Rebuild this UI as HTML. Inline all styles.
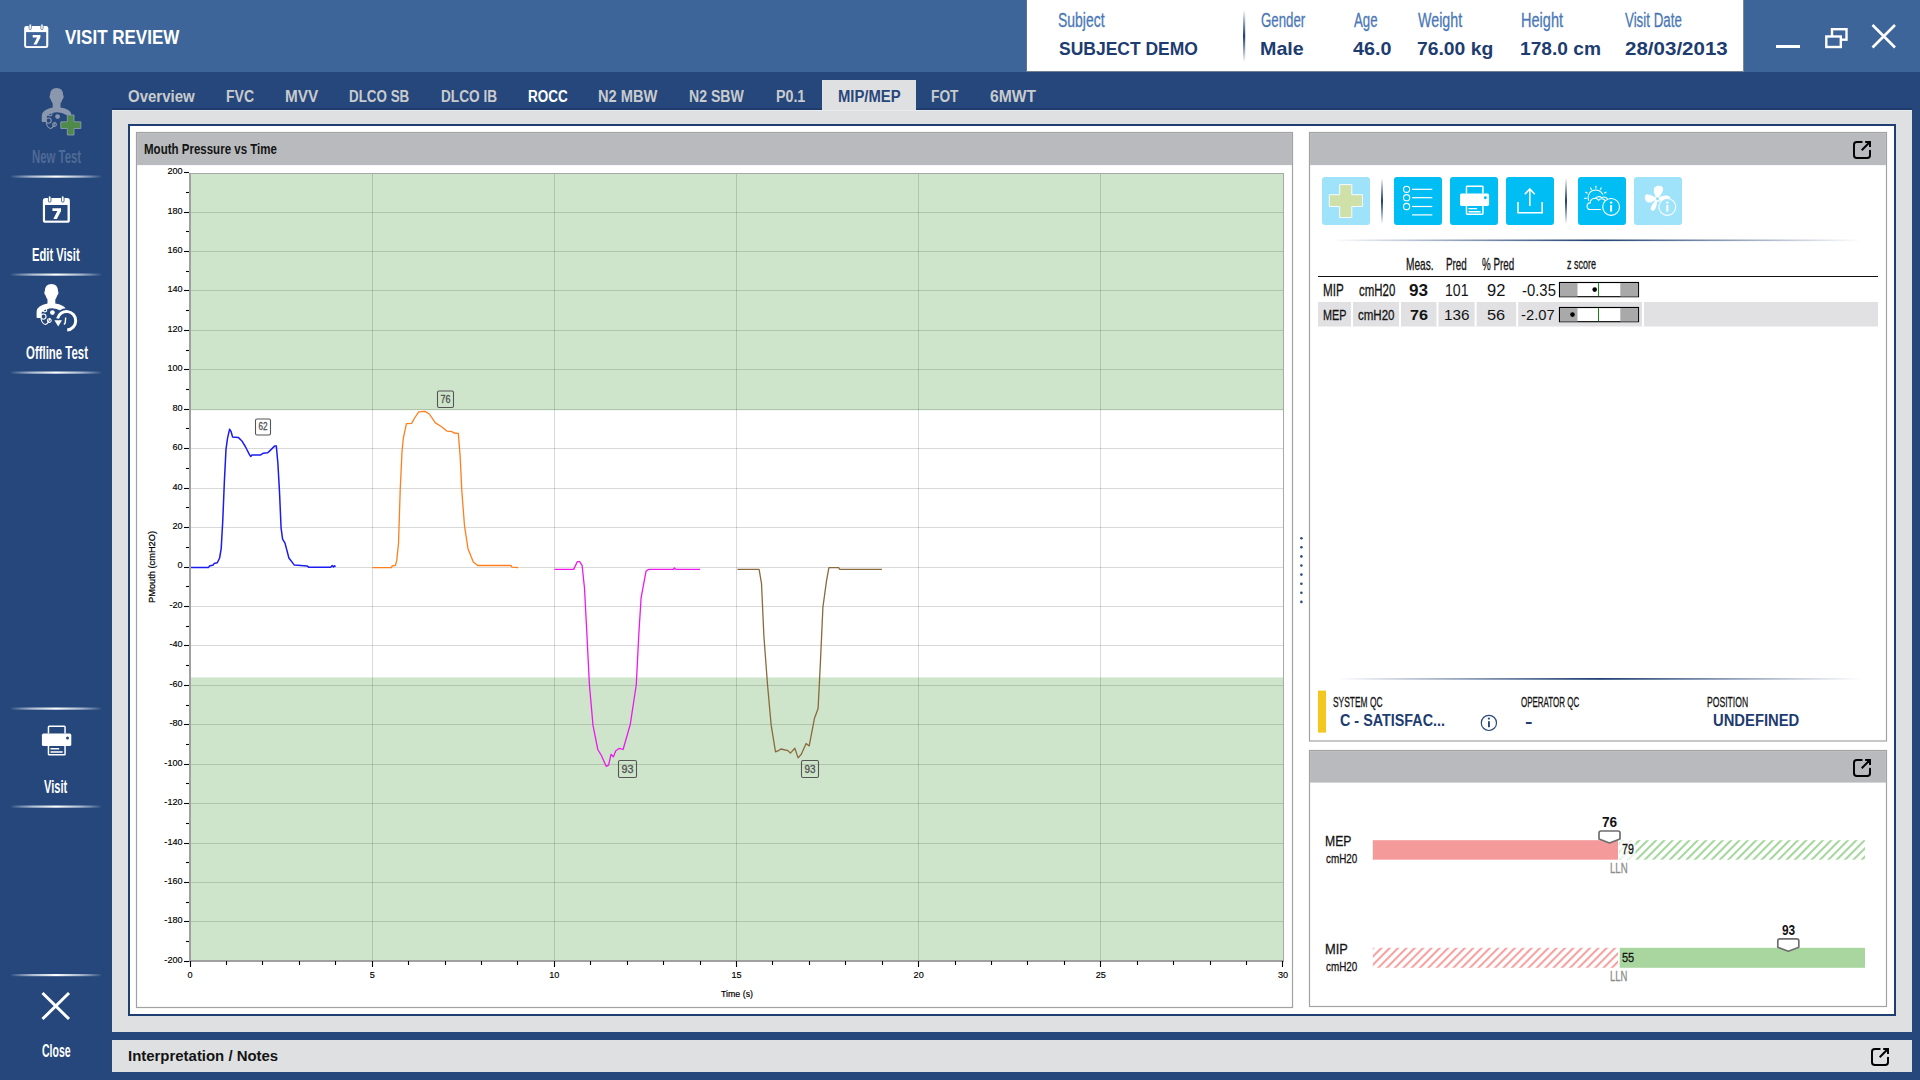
<!DOCTYPE html>
<html><head><meta charset="utf-8"><title>Visit Review</title>
<style>
html,body{margin:0;padding:0}
body{width:1920px;height:1080px;overflow:hidden;background:#25477b;position:relative;font-family:"Liberation Sans",sans-serif}
.a{position:absolute}
.t{position:absolute;white-space:nowrap;transform-origin:0 0}
</style></head><body>
<svg class="a" style="left:0;top:0" width="1920" height="1080" viewBox="0 0 1920 1080"><defs>
<linearGradient id="sepH" x1="0" x2="1" y1="0" y2="0">
 <stop offset="0" stop-color="#ffffff" stop-opacity="0.05"/>
 <stop offset="0.25" stop-color="#dfe6f0" stop-opacity="0.75"/>
 <stop offset="0.5" stop-color="#ffffff" stop-opacity="1"/>
 <stop offset="0.75" stop-color="#dfe6f0" stop-opacity="0.75"/>
 <stop offset="1" stop-color="#ffffff" stop-opacity="0.05"/>
</linearGradient>
<linearGradient id="navyH" x1="0" x2="1" y1="0" y2="0">
 <stop offset="0" stop-color="#1f3f73" stop-opacity="0"/>
 <stop offset="0.5" stop-color="#1f3f73" stop-opacity="1"/>
 <stop offset="1" stop-color="#1f3f73" stop-opacity="0"/>
</linearGradient>
<linearGradient id="navyV" x1="0" x2="0" y1="0" y2="1">
 <stop offset="0" stop-color="#1f3f73" stop-opacity="0"/>
 <stop offset="0.5" stop-color="#1f3f73" stop-opacity="1"/>
 <stop offset="1" stop-color="#1f3f73" stop-opacity="0"/>
</linearGradient>
<pattern id="hatchG" patternUnits="userSpaceOnUse" width="5.9" height="5.9" patternTransform="rotate(45)">
 <rect x="0" y="0" width="2.1" height="5.9" fill="#a6d59e"/>
</pattern>
<pattern id="hatchR" patternUnits="userSpaceOnUse" width="5.9" height="5.9" patternTransform="rotate(45)">
 <rect x="0" y="0" width="2.1" height="5.9" fill="#f4a2a2"/>
</pattern>
</defs><rect x="0" y="0" width="1920" height="72" fill="#3d6599" />
<rect x="1027" y="0" width="716" height="71" fill="#ffffff" />
<line x1="1026.5" y1="0" x2="1026.5" y2="72" stroke="#5f7390" stroke-width="1" />
<line x1="1026" y1="71.5" x2="1743.5" y2="71.5" stroke="#6f7f8f" stroke-width="1" />
<line x1="1743.5" y1="0" x2="1743.5" y2="72" stroke="#7d8a96" stroke-width="1" />
<rect x="1243" y="10" width="2.2" height="52" fill="url(#navyV)" />
<g transform="translate(24,24) scale(1.0)"><rect x="0.15" y="1.9" width="24.15" height="22.2" rx="2.4" fill="#ffffff"/><rect x="2.1" y="8.1" width="20.1" height="14" fill="#3d6599"/><rect x="5.1" y="0" width="2.3" height="5.6" rx="1.1" fill="#ffffff" stroke="#3d6599" stroke-width="0.7"/><rect x="16.8" y="0" width="2.3" height="5.6" rx="1.1" fill="#ffffff" stroke="#3d6599" stroke-width="0.7"/><path d="M8.7 11.1 H16.4 V13.4 L12.7 20.6 H9.5 L13.1 13.6 H8.7 Z" fill="#ffffff"/></g>
<rect x="1776" y="45" width="24" height="3" fill="#ffffff" />
<rect x="1832" y="29.2" width="14.5" height="10.5" fill="none" stroke="#ffffff" stroke-width="2.4"/>
<rect x="1826.3" y="36.5" width="14.5" height="10.5" fill="#3d6599" stroke="#ffffff" stroke-width="2.4"/>
<path d="M1872.5 25 L1895 47.5 M1895 25 L1872.5 47.5" stroke="#ffffff" stroke-width="2.6"/>
<rect x="11" y="175.5" width="90" height="2.2" fill="url(#sepH)" />
<rect x="11" y="273.5" width="90" height="2.2" fill="url(#sepH)" />
<rect x="11" y="371.5" width="90" height="2.2" fill="url(#sepH)" />
<rect x="11" y="707.5" width="90" height="2.2" fill="url(#sepH)" />
<rect x="11" y="805.5" width="90" height="2.2" fill="url(#sepH)" />
<rect x="11" y="974" width="90" height="2.2" fill="url(#sepH)" />
<rect x="822" y="80" width="94" height="31" fill="#dfe0e2" />
<rect x="112" y="110" width="1800" height="922" fill="#dfe0e2" />
<rect x="112" y="108" width="710" height="2" fill="#1f3c6c" />
<rect x="916" y="108" width="996" height="2" fill="#1f3c6c" />
<rect x="112" y="110" width="1800" height="1" fill="#e8ecec" />
<rect x="128" y="124" width="1768" height="892" fill="#1f3f73" />
<rect x="130" y="126" width="1764" height="888" fill="#ffffff" />
<rect x="112" y="1040" width="1800" height="32" fill="#dfe0e2" />
<rect x="136.5" y="132.5" width="1156.0" height="875.0" fill="#ffffff" stroke="#a2a2a2" stroke-width="1.2"/>
<rect x="137.1" y="133.1" width="1154.8" height="32" fill="#b9babe" />
<rect x="1309.5" y="132.5" width="577.0" height="608.5" fill="#ffffff" stroke="#a2a2a2" stroke-width="1.2"/>
<rect x="1310.1" y="133.1" width="575.8" height="32" fill="#b9babe" />
<rect x="1309.5" y="750.5" width="577.0" height="256.0" fill="#ffffff" stroke="#a2a2a2" stroke-width="1.2"/>
<rect x="1310.1" y="751.1" width="575.8" height="31.5" fill="#b9babe" />
<path d="M1861.7 142 H1856.8 Q1854 142 1854 144.8 V155.2 Q1854 158 1856.8 158 H1867.2 Q1870 158 1870 155.2 V150.6" fill="none" stroke="#000" stroke-width="1.95" stroke-linecap="round"/>
<path d="M1861.7 150.2 L1869.6 142.3 M1865.2 142 H1870 V146.9" fill="none" stroke="#000" stroke-width="1.95" stroke-linecap="butt"/>
<path d="M1861.7 760 H1856.8 Q1854 760 1854 762.8 V773.2 Q1854 776 1856.8 776 H1867.2 Q1870 776 1870 773.2 V768.6" fill="none" stroke="#000" stroke-width="1.95" stroke-linecap="round"/>
<path d="M1861.7 768.2 L1869.6 760.3 M1865.2 760 H1870 V764.9" fill="none" stroke="#000" stroke-width="1.95" stroke-linecap="butt"/>
<path d="M1879.7 1049 H1874.8 Q1872 1049 1872 1051.8 V1062.2 Q1872 1065 1874.8 1065 H1885.2 Q1888 1065 1888 1062.2 V1057.6" fill="none" stroke="#000" stroke-width="1.95" stroke-linecap="round"/>
<path d="M1879.7 1057.2 L1887.6 1049.3 M1883.2 1049 H1888 V1053.9" fill="none" stroke="#000" stroke-width="1.95" stroke-linecap="butt"/>
<circle cx="1301.4" cy="538.2" r="1.3" fill="#2b4a7c"/>
<circle cx="1301.4" cy="547.3" r="1.3" fill="#2b4a7c"/>
<circle cx="1301.4" cy="556.4" r="1.3" fill="#2b4a7c"/>
<circle cx="1301.4" cy="565.5" r="1.3" fill="#2b4a7c"/>
<circle cx="1301.4" cy="574.6" r="1.3" fill="#2b4a7c"/>
<circle cx="1301.4" cy="583.7" r="1.3" fill="#2b4a7c"/>
<circle cx="1301.4" cy="592.8" r="1.3" fill="#2b4a7c"/>
<circle cx="1301.4" cy="601.9" r="1.3" fill="#2b4a7c"/>
<rect x="191" y="174" width="1092" height="786" fill="#ffffff" />
<rect x="191" y="174" width="1092" height="236.2419" fill="#cee5cc" />
<rect x="191" y="677.4208" width="1092" height="282.5792" fill="#cee5cc" />
<line x1="191" y1="921.5" x2="1283" y2="921.5" stroke="#000000" stroke-width="1" stroke-opacity="0.15"/>
<line x1="191" y1="882.5" x2="1283" y2="882.5" stroke="#000000" stroke-width="1" stroke-opacity="0.15"/>
<line x1="191" y1="843.5" x2="1283" y2="843.5" stroke="#000000" stroke-width="1" stroke-opacity="0.15"/>
<line x1="191" y1="803.5" x2="1283" y2="803.5" stroke="#000000" stroke-width="1" stroke-opacity="0.15"/>
<line x1="191" y1="764.5" x2="1283" y2="764.5" stroke="#000000" stroke-width="1" stroke-opacity="0.15"/>
<line x1="191" y1="724.5" x2="1283" y2="724.5" stroke="#000000" stroke-width="1" stroke-opacity="0.15"/>
<line x1="191" y1="685.5" x2="1283" y2="685.5" stroke="#000000" stroke-width="1" stroke-opacity="0.15"/>
<line x1="191" y1="645.5" x2="1283" y2="645.5" stroke="#000000" stroke-width="1" stroke-opacity="0.15"/>
<line x1="191" y1="606.5" x2="1283" y2="606.5" stroke="#000000" stroke-width="1" stroke-opacity="0.15"/>
<line x1="191" y1="567.5" x2="1283" y2="567.5" stroke="#000000" stroke-width="1" stroke-opacity="0.15"/>
<line x1="191" y1="527.5" x2="1283" y2="527.5" stroke="#000000" stroke-width="1" stroke-opacity="0.15"/>
<line x1="191" y1="488.5" x2="1283" y2="488.5" stroke="#000000" stroke-width="1" stroke-opacity="0.15"/>
<line x1="191" y1="448.5" x2="1283" y2="448.5" stroke="#000000" stroke-width="1" stroke-opacity="0.15"/>
<line x1="191" y1="409.5" x2="1283" y2="409.5" stroke="#000000" stroke-width="1" stroke-opacity="0.15"/>
<line x1="191" y1="369.5" x2="1283" y2="369.5" stroke="#000000" stroke-width="1" stroke-opacity="0.15"/>
<line x1="191" y1="330.5" x2="1283" y2="330.5" stroke="#000000" stroke-width="1" stroke-opacity="0.15"/>
<line x1="191" y1="290.5" x2="1283" y2="290.5" stroke="#000000" stroke-width="1" stroke-opacity="0.15"/>
<line x1="191" y1="251.5" x2="1283" y2="251.5" stroke="#000000" stroke-width="1" stroke-opacity="0.15"/>
<line x1="191" y1="212.5" x2="1283" y2="212.5" stroke="#000000" stroke-width="1" stroke-opacity="0.15"/>
<line x1="372.5" y1="174" x2="372.5" y2="960" stroke="#000000" stroke-width="1" stroke-opacity="0.15"/>
<line x1="554.5" y1="174" x2="554.5" y2="960" stroke="#000000" stroke-width="1" stroke-opacity="0.15"/>
<line x1="736.5" y1="174" x2="736.5" y2="960" stroke="#000000" stroke-width="1" stroke-opacity="0.15"/>
<line x1="918.5" y1="174" x2="918.5" y2="960" stroke="#000000" stroke-width="1" stroke-opacity="0.15"/>
<line x1="1100.5" y1="174" x2="1100.5" y2="960" stroke="#000000" stroke-width="1" stroke-opacity="0.15"/>
<line x1="191" y1="173.5" x2="1284" y2="173.5" stroke="#a8a8a8" stroke-width="1" />
<line x1="1283.5" y1="173" x2="1283.5" y2="961" stroke="#a8a8a8" stroke-width="1" />
<rect x="189" y="173" width="2" height="789" fill="#a0a0a0" />
<rect x="189" y="960" width="1095" height="2" fill="#a0a0a0" />
<line x1="184" y1="961.5" x2="189" y2="961.5" stroke="#000" stroke-width="1.1" />
<line x1="186" y1="941.5" x2="189" y2="941.5" stroke="#000" stroke-width="1.1" />
<line x1="184" y1="921.5" x2="189" y2="921.5" stroke="#000" stroke-width="1.1" />
<line x1="186" y1="902.5" x2="189" y2="902.5" stroke="#000" stroke-width="1.1" />
<line x1="184" y1="882.5" x2="189" y2="882.5" stroke="#000" stroke-width="1.1" />
<line x1="186" y1="862.5" x2="189" y2="862.5" stroke="#000" stroke-width="1.1" />
<line x1="184" y1="843.5" x2="189" y2="843.5" stroke="#000" stroke-width="1.1" />
<line x1="186" y1="823.5" x2="189" y2="823.5" stroke="#000" stroke-width="1.1" />
<line x1="184" y1="803.5" x2="189" y2="803.5" stroke="#000" stroke-width="1.1" />
<line x1="186" y1="783.5" x2="189" y2="783.5" stroke="#000" stroke-width="1.1" />
<line x1="184" y1="764.5" x2="189" y2="764.5" stroke="#000" stroke-width="1.1" />
<line x1="186" y1="744.5" x2="189" y2="744.5" stroke="#000" stroke-width="1.1" />
<line x1="184" y1="724.5" x2="189" y2="724.5" stroke="#000" stroke-width="1.1" />
<line x1="186" y1="705.5" x2="189" y2="705.5" stroke="#000" stroke-width="1.1" />
<line x1="184" y1="685.5" x2="189" y2="685.5" stroke="#000" stroke-width="1.1" />
<line x1="186" y1="665.5" x2="189" y2="665.5" stroke="#000" stroke-width="1.1" />
<line x1="184" y1="645.5" x2="189" y2="645.5" stroke="#000" stroke-width="1.1" />
<line x1="186" y1="626.5" x2="189" y2="626.5" stroke="#000" stroke-width="1.1" />
<line x1="184" y1="606.5" x2="189" y2="606.5" stroke="#000" stroke-width="1.1" />
<line x1="186" y1="586.5" x2="189" y2="586.5" stroke="#000" stroke-width="1.1" />
<line x1="184" y1="567.5" x2="189" y2="567.5" stroke="#000" stroke-width="1.1" />
<line x1="186" y1="547.5" x2="189" y2="547.5" stroke="#000" stroke-width="1.1" />
<line x1="184" y1="527.5" x2="189" y2="527.5" stroke="#000" stroke-width="1.1" />
<line x1="186" y1="507.5" x2="189" y2="507.5" stroke="#000" stroke-width="1.1" />
<line x1="184" y1="488.5" x2="189" y2="488.5" stroke="#000" stroke-width="1.1" />
<line x1="186" y1="468.5" x2="189" y2="468.5" stroke="#000" stroke-width="1.1" />
<line x1="184" y1="448.5" x2="189" y2="448.5" stroke="#000" stroke-width="1.1" />
<line x1="186" y1="428.5" x2="189" y2="428.5" stroke="#000" stroke-width="1.1" />
<line x1="184" y1="409.5" x2="189" y2="409.5" stroke="#000" stroke-width="1.1" />
<line x1="186" y1="389.5" x2="189" y2="389.5" stroke="#000" stroke-width="1.1" />
<line x1="184" y1="369.5" x2="189" y2="369.5" stroke="#000" stroke-width="1.1" />
<line x1="186" y1="350.5" x2="189" y2="350.5" stroke="#000" stroke-width="1.1" />
<line x1="184" y1="330.5" x2="189" y2="330.5" stroke="#000" stroke-width="1.1" />
<line x1="186" y1="310.5" x2="189" y2="310.5" stroke="#000" stroke-width="1.1" />
<line x1="184" y1="290.5" x2="189" y2="290.5" stroke="#000" stroke-width="1.1" />
<line x1="186" y1="271.5" x2="189" y2="271.5" stroke="#000" stroke-width="1.1" />
<line x1="184" y1="251.5" x2="189" y2="251.5" stroke="#000" stroke-width="1.1" />
<line x1="186" y1="231.5" x2="189" y2="231.5" stroke="#000" stroke-width="1.1" />
<line x1="184" y1="212.5" x2="189" y2="212.5" stroke="#000" stroke-width="1.1" />
<line x1="186" y1="192.5" x2="189" y2="192.5" stroke="#000" stroke-width="1.1" />
<line x1="184" y1="172.5" x2="189" y2="172.5" stroke="#000" stroke-width="1.1" />
<line x1="190.5" y1="961" x2="190.5" y2="967" stroke="#000" stroke-width="1.1" />
<line x1="226.5" y1="961" x2="226.5" y2="965" stroke="#000" stroke-width="1.1" />
<line x1="262.5" y1="961" x2="262.5" y2="965" stroke="#000" stroke-width="1.1" />
<line x1="299.5" y1="961" x2="299.5" y2="965" stroke="#000" stroke-width="1.1" />
<line x1="335.5" y1="961" x2="335.5" y2="965" stroke="#000" stroke-width="1.1" />
<line x1="372.5" y1="961" x2="372.5" y2="967" stroke="#000" stroke-width="1.1" />
<line x1="408.5" y1="961" x2="408.5" y2="965" stroke="#000" stroke-width="1.1" />
<line x1="445.5" y1="961" x2="445.5" y2="965" stroke="#000" stroke-width="1.1" />
<line x1="481.5" y1="961" x2="481.5" y2="965" stroke="#000" stroke-width="1.1" />
<line x1="517.5" y1="961" x2="517.5" y2="965" stroke="#000" stroke-width="1.1" />
<line x1="554.5" y1="961" x2="554.5" y2="967" stroke="#000" stroke-width="1.1" />
<line x1="590.5" y1="961" x2="590.5" y2="965" stroke="#000" stroke-width="1.1" />
<line x1="627.5" y1="961" x2="627.5" y2="965" stroke="#000" stroke-width="1.1" />
<line x1="663.5" y1="961" x2="663.5" y2="965" stroke="#000" stroke-width="1.1" />
<line x1="700.5" y1="961" x2="700.5" y2="965" stroke="#000" stroke-width="1.1" />
<line x1="736.5" y1="961" x2="736.5" y2="967" stroke="#000" stroke-width="1.1" />
<line x1="772.5" y1="961" x2="772.5" y2="965" stroke="#000" stroke-width="1.1" />
<line x1="809.5" y1="961" x2="809.5" y2="965" stroke="#000" stroke-width="1.1" />
<line x1="845.5" y1="961" x2="845.5" y2="965" stroke="#000" stroke-width="1.1" />
<line x1="882.5" y1="961" x2="882.5" y2="965" stroke="#000" stroke-width="1.1" />
<line x1="918.5" y1="961" x2="918.5" y2="967" stroke="#000" stroke-width="1.1" />
<line x1="955.5" y1="961" x2="955.5" y2="965" stroke="#000" stroke-width="1.1" />
<line x1="991.5" y1="961" x2="991.5" y2="965" stroke="#000" stroke-width="1.1" />
<line x1="1027.5" y1="961" x2="1027.5" y2="965" stroke="#000" stroke-width="1.1" />
<line x1="1064.5" y1="961" x2="1064.5" y2="965" stroke="#000" stroke-width="1.1" />
<line x1="1100.5" y1="961" x2="1100.5" y2="967" stroke="#000" stroke-width="1.1" />
<line x1="1137.5" y1="961" x2="1137.5" y2="965" stroke="#000" stroke-width="1.1" />
<line x1="1173.5" y1="961" x2="1173.5" y2="965" stroke="#000" stroke-width="1.1" />
<line x1="1210.5" y1="961" x2="1210.5" y2="965" stroke="#000" stroke-width="1.1" />
<line x1="1246.5" y1="961" x2="1246.5" y2="965" stroke="#000" stroke-width="1.1" />
<line x1="1282.5" y1="961" x2="1282.5" y2="967" stroke="#000" stroke-width="1.1" />
<text x="182.6" y="962.9" text-anchor="end" font-family="Liberation Sans" font-size="9.5" fill="#000" stroke="#000" stroke-width="0.15" transform="translate(182.6 0) scale(0.96 1) translate(-182.6 0)">-200</text>
<text x="182.6" y="923.4" text-anchor="end" font-family="Liberation Sans" font-size="9.5" fill="#000" stroke="#000" stroke-width="0.15" transform="translate(182.6 0) scale(0.96 1) translate(-182.6 0)">-180</text>
<text x="182.6" y="884.0" text-anchor="end" font-family="Liberation Sans" font-size="9.5" fill="#000" stroke="#000" stroke-width="0.15" transform="translate(182.6 0) scale(0.96 1) translate(-182.6 0)">-160</text>
<text x="182.6" y="844.6" text-anchor="end" font-family="Liberation Sans" font-size="9.5" fill="#000" stroke="#000" stroke-width="0.15" transform="translate(182.6 0) scale(0.96 1) translate(-182.6 0)">-140</text>
<text x="182.6" y="805.1" text-anchor="end" font-family="Liberation Sans" font-size="9.5" fill="#000" stroke="#000" stroke-width="0.15" transform="translate(182.6 0) scale(0.96 1) translate(-182.6 0)">-120</text>
<text x="182.6" y="765.7" text-anchor="end" font-family="Liberation Sans" font-size="9.5" fill="#000" stroke="#000" stroke-width="0.15" transform="translate(182.6 0) scale(0.96 1) translate(-182.6 0)">-100</text>
<text x="182.6" y="726.2" text-anchor="end" font-family="Liberation Sans" font-size="9.5" fill="#000" stroke="#000" stroke-width="0.15" transform="translate(182.6 0) scale(0.96 1) translate(-182.6 0)">-80</text>
<text x="182.6" y="686.8" text-anchor="end" font-family="Liberation Sans" font-size="9.5" fill="#000" stroke="#000" stroke-width="0.15" transform="translate(182.6 0) scale(0.96 1) translate(-182.6 0)">-60</text>
<text x="182.6" y="647.4" text-anchor="end" font-family="Liberation Sans" font-size="9.5" fill="#000" stroke="#000" stroke-width="0.15" transform="translate(182.6 0) scale(0.96 1) translate(-182.6 0)">-40</text>
<text x="182.6" y="607.9" text-anchor="end" font-family="Liberation Sans" font-size="9.5" fill="#000" stroke="#000" stroke-width="0.15" transform="translate(182.6 0) scale(0.96 1) translate(-182.6 0)">-20</text>
<text x="182.6" y="568.5" text-anchor="end" font-family="Liberation Sans" font-size="9.5" fill="#000" stroke="#000" stroke-width="0.15" transform="translate(182.6 0) scale(0.96 1) translate(-182.6 0)">0</text>
<text x="182.6" y="529.1" text-anchor="end" font-family="Liberation Sans" font-size="9.5" fill="#000" stroke="#000" stroke-width="0.15" transform="translate(182.6 0) scale(0.96 1) translate(-182.6 0)">20</text>
<text x="182.6" y="489.6" text-anchor="end" font-family="Liberation Sans" font-size="9.5" fill="#000" stroke="#000" stroke-width="0.15" transform="translate(182.6 0) scale(0.96 1) translate(-182.6 0)">40</text>
<text x="182.6" y="450.2" text-anchor="end" font-family="Liberation Sans" font-size="9.5" fill="#000" stroke="#000" stroke-width="0.15" transform="translate(182.6 0) scale(0.96 1) translate(-182.6 0)">60</text>
<text x="182.6" y="410.8" text-anchor="end" font-family="Liberation Sans" font-size="9.5" fill="#000" stroke="#000" stroke-width="0.15" transform="translate(182.6 0) scale(0.96 1) translate(-182.6 0)">80</text>
<text x="182.6" y="371.3" text-anchor="end" font-family="Liberation Sans" font-size="9.5" fill="#000" stroke="#000" stroke-width="0.15" transform="translate(182.6 0) scale(0.96 1) translate(-182.6 0)">100</text>
<text x="182.6" y="331.9" text-anchor="end" font-family="Liberation Sans" font-size="9.5" fill="#000" stroke="#000" stroke-width="0.15" transform="translate(182.6 0) scale(0.96 1) translate(-182.6 0)">120</text>
<text x="182.6" y="292.4" text-anchor="end" font-family="Liberation Sans" font-size="9.5" fill="#000" stroke="#000" stroke-width="0.15" transform="translate(182.6 0) scale(0.96 1) translate(-182.6 0)">140</text>
<text x="182.6" y="253.0" text-anchor="end" font-family="Liberation Sans" font-size="9.5" fill="#000" stroke="#000" stroke-width="0.15" transform="translate(182.6 0) scale(0.96 1) translate(-182.6 0)">160</text>
<text x="182.6" y="213.6" text-anchor="end" font-family="Liberation Sans" font-size="9.5" fill="#000" stroke="#000" stroke-width="0.15" transform="translate(182.6 0) scale(0.96 1) translate(-182.6 0)">180</text>
<text x="182.6" y="174.1" text-anchor="end" font-family="Liberation Sans" font-size="9.5" fill="#000" stroke="#000" stroke-width="0.15" transform="translate(182.6 0) scale(0.96 1) translate(-182.6 0)">200</text>
<text x="190.0" y="978.4" text-anchor="middle" font-family="Liberation Sans" font-size="9.5" fill="#000" stroke="#000" stroke-width="0.15" transform="translate(190.0 0) scale(0.96 1) translate(-190.0 0)">0</text>
<text x="372.2" y="978.4" text-anchor="middle" font-family="Liberation Sans" font-size="9.5" fill="#000" stroke="#000" stroke-width="0.15" transform="translate(372.2 0) scale(0.96 1) translate(-372.2 0)">5</text>
<text x="554.3" y="978.4" text-anchor="middle" font-family="Liberation Sans" font-size="9.5" fill="#000" stroke="#000" stroke-width="0.15" transform="translate(554.3 0) scale(0.96 1) translate(-554.3 0)">10</text>
<text x="736.5" y="978.4" text-anchor="middle" font-family="Liberation Sans" font-size="9.5" fill="#000" stroke="#000" stroke-width="0.15" transform="translate(736.5 0) scale(0.96 1) translate(-736.5 0)">15</text>
<text x="918.7" y="978.4" text-anchor="middle" font-family="Liberation Sans" font-size="9.5" fill="#000" stroke="#000" stroke-width="0.15" transform="translate(918.7 0) scale(0.96 1) translate(-918.7 0)">20</text>
<text x="1100.8" y="978.4" text-anchor="middle" font-family="Liberation Sans" font-size="9.5" fill="#000" stroke="#000" stroke-width="0.15" transform="translate(1100.8 0) scale(0.96 1) translate(-1100.8 0)">25</text>
<text x="1283.0" y="978.4" text-anchor="middle" font-family="Liberation Sans" font-size="9.5" fill="#000" stroke="#000" stroke-width="0.15" transform="translate(1283.0 0) scale(0.96 1) translate(-1283.0 0)">30</text>
<text x="737" y="997.2" text-anchor="middle" font-family="Liberation Sans" font-size="9.8" fill="#000" stroke="#000" stroke-width="0.2" textLength="32" lengthAdjust="spacingAndGlyphs">Time (s)</text>
<text x="0" y="0" text-anchor="middle" font-family="Liberation Sans" font-size="9.8" fill="#000" stroke="#000" stroke-width="0.25" textLength="72" lengthAdjust="spacingAndGlyphs" transform="translate(155.4 567) rotate(-90)">PMouth (cmH2O)</text>
<polyline points="191.0,567.5 208.6,567.5 209.4,566.0 213.3,565.0 214.1,563.5 217.3,562.8 219.6,558.0 221.2,548.6 222.8,520.0 224.4,480.9 226.0,449.4 227.5,438.3 229.6,429.2 231.0,431.3 232.6,437.1 238.5,437.6 241.7,440.7 245.6,447.0 249.6,454.9 250.8,456.5 251.9,454.9 260.6,454.9 263.0,453.3 267.7,452.8 270.0,450.6 274.8,445.9 276.3,445.9 277.9,463.5 279.5,491.9 281.1,528.1 282.6,539.1 285.0,543.1 288.9,558.0 294.4,565.1 307.0,565.9 308.6,567.2 330.7,567.2 332.2,565.6 333.5,567.0 334.5,565.8 335.6,566.7" fill="none" stroke="#1c1cf0" stroke-width="1.5" stroke-linejoin="round"/>
<polyline points="372.4,567.6 391.4,567.6 392.3,565.8 395.3,565.5 396.7,561.0 398.5,543.5 400.2,490.6 402.0,451.9 403.4,437.8 406.4,423.7 411.7,423.4 414.3,418.5 418.7,411.8 424.9,411.4 429.3,414.0 435.4,422.9 441.6,426.7 446.9,431.1 452.1,431.7 453.9,433.0 458.3,433.4 460.1,455.4 461.8,490.6 464.5,525.8 468.0,548.7 473.3,561.9 477.7,565.5 511.1,565.5 512.0,567.2 518.2,567.6" fill="none" stroke="#ff7f1e" stroke-width="1.3" stroke-linejoin="round"/>
<polyline points="554.4,569.4 573.7,569.4 577.3,561.7 579.7,561.7 582.1,565.3 584.5,588.2 587.0,636.3 589.4,684.5 593.0,725.4 597.8,749.5 601.4,755.5 606.2,766.3 608.6,765.1 611.0,754.3 613.4,756.7 615.8,750.7 619.5,748.3 623.1,749.5 630.3,724.2 636.3,684.5 638.7,636.3 641.1,597.8 646.0,571.3 648.4,569.4 673.6,569.4 674.4,567.9 676.0,569.4 700.1,569.4" fill="none" stroke="#ee18ee" stroke-width="1.3" stroke-linejoin="round"/>
<polyline points="737.4,569.4 759.1,569.4 761.5,583.3 763.9,636.3 767.5,684.5 771.2,725.4 775.5,751.9 778.4,750.7 780.8,749.0 788.0,750.7 790.4,753.1 794.8,748.3 798.1,757.9 801.3,754.3 806.1,743.5 809.2,745.9 814.5,718.2 818.1,708.6 820.5,660.4 822.9,607.4 826.5,580.9 828.9,567.7 838.6,567.7 839.8,569.4 881.9,569.4" fill="none" stroke="#8a6a3c" stroke-width="1.3" stroke-linejoin="round"/>
<rect x="255.5" y="419" width="15.0" height="16.0" rx="1.5" fill="none" stroke="#555" stroke-width="1.1"/>
<text x="263.0" y="430.4" text-anchor="middle" font-family="Liberation Sans" font-size="10.4" font-weight="400" fill="#505050" stroke="#505050" stroke-width="0.3" textLength="9.0" lengthAdjust="spacingAndGlyphs">62</text>
<rect x="437.5" y="391" width="16.0" height="16.5" rx="1.5" fill="none" stroke="#555" stroke-width="1.1"/>
<text x="445.5" y="402.9" text-anchor="middle" font-family="Liberation Sans" font-size="10.4" font-weight="400" fill="#505050" stroke="#505050" stroke-width="0.3" textLength="10.0" lengthAdjust="spacingAndGlyphs">76</text>
<rect x="618.5" y="760.5" width="18.0" height="17.0" rx="1.5" fill="none" stroke="#555" stroke-width="1.1"/>
<text x="627.5" y="772.9" text-anchor="middle" font-family="Liberation Sans" font-size="10.4" font-weight="400" fill="#505050" stroke="#505050" stroke-width="0.3" textLength="12.0" lengthAdjust="spacingAndGlyphs">93</text>
<rect x="801.5" y="760.5" width="17.0" height="17.0" rx="1.5" fill="none" stroke="#555" stroke-width="1.1"/>
<text x="810.0" y="772.9" text-anchor="middle" font-family="Liberation Sans" font-size="10.4" font-weight="400" fill="#505050" stroke="#505050" stroke-width="0.3" textLength="11.0" lengthAdjust="spacingAndGlyphs">93</text>
<g transform="translate(42.7,195.9) scale(1.118)"><rect x="0.15" y="1.9" width="24.15" height="22.2" rx="2.4" fill="#ffffff"/><rect x="2.1" y="8.1" width="20.1" height="14" fill="#25477b"/><rect x="5.1" y="0" width="2.3" height="5.6" rx="1.1" fill="#ffffff" stroke="#25477b" stroke-width="0.7"/><rect x="16.8" y="0" width="2.3" height="5.6" rx="1.1" fill="#ffffff" stroke="#25477b" stroke-width="0.7"/><path d="M8.7 11.1 H16.4 V13.4 L12.7 20.6 H9.5 L13.1 13.6 H8.7 Z" fill="#ffffff"/></g>
<g><path d="M51.4 284 Q57.8 284 58 291 Q58.6 291.5 58.4 293.6 Q57.8 295 57.2 295.4 Q56.2 298.5 55.3 299.5 V303.6 Q63.5 305 65.6 308.5 L66.2 311 H61 Q57 308.2 52 308.2 Q45 308.4 41.6 312.6 V317.8 Q38.6 318.4 36.6 317.7 V311.5 Q37.2 305.5 47.5 303.6 V299.5 Q46.6 298.5 45.6 295.4 Q45 295 44.4 293.6 Q44.2 291.5 44.8 291 Q45 284 51.4 284 Z" fill="#ffffff"/><g fill="none" stroke="#ffffff" stroke-width="1.1"><circle cx="43.4" cy="316.6" r="2.6"/><circle cx="44.9" cy="310" r="1.9"/><circle cx="49.3" cy="320.6" r="1.9"/><path d="M41 318.5 Q42 324 45.5 324.5 Q48.5 323.5 50 318 M47.4 308.5 Q50.5 306 54 307 M55 306.8 Q61 306.6 63 310.5"/></g><circle cx="52.4" cy="312.6" r="2.4" fill="#ffffff"/></g>
<path d="M57.6 318.5 A9.2 9.2 0 1 1 67.2 329.9" fill="none" stroke="#25477b" stroke-width="6.5"/>
<path d="M57.6 318.5 A9.2 9.2 0 1 1 67.2 329.9" fill="none" stroke="#ffffff" stroke-width="3"/>
<path d="M54.4 320.2 H62 L58.2 326.4 Z" fill="#ffffff"/>
<path d="M65.7 317.5 L65.2 323 L64 324.5" fill="none" stroke="#ffffff" stroke-width="1.4"/>
<g transform="translate(5.2,-196)"><g><path d="M51.4 284 Q57.8 284 58 291 Q58.6 291.5 58.4 293.6 Q57.8 295 57.2 295.4 Q56.2 298.5 55.3 299.5 V303.6 Q63.5 305 65.6 308.5 L66.2 311 H61 Q57 308.2 52 308.2 Q45 308.4 41.6 312.6 V317.8 Q38.6 318.4 36.6 317.7 V311.5 Q37.2 305.5 47.5 303.6 V299.5 Q46.6 298.5 45.6 295.4 Q45 295 44.4 293.6 Q44.2 291.5 44.8 291 Q45 284 51.4 284 Z" fill="#8a97ad"/><g fill="none" stroke="#8a97ad" stroke-width="1.1"><circle cx="43.4" cy="316.6" r="2.6"/><circle cx="44.9" cy="310" r="1.9"/><circle cx="49.3" cy="320.6" r="1.9"/><path d="M41 318.5 Q42 324 45.5 324.5 Q48.5 323.5 50 318 M47.4 308.5 Q50.5 306 54 307 M55 306.8 Q61 306.6 63 310.5"/></g><circle cx="52.4" cy="312.6" r="2.4" fill="#8a97ad"/></g></g>
<path d="M67.3 115 H74 V121.8 H80.8 V128.5 H74 V135 H67.3 V128.5 H60.8 V121.8 H67.3 Z" fill="#4f8a4a" stroke="#8a9aae" stroke-width="0.9"/>
<g transform="translate(41.9,725.6) scale(1.0)"><path d="M6.55 8 V1.5 Q6.55 0.75 7.3 0.75 H22.4 Q23.15 0.75 23.15 1.5 V8" fill="none" stroke="#ffffff" stroke-width="1.5"/><rect x="0" y="8" width="29.4" height="12.5" rx="1.6" fill="#ffffff"/><circle cx="25.6" cy="12.3" r="1.5" fill="#25477b"/><path d="M6.55 20.5 V28.3 Q6.55 29.05 7.3 29.05 H22.4 Q23.15 29.05 23.15 28.3 V20.5" fill="none" stroke="#ffffff" stroke-width="1.5"/><path d="M8.6 23.2 H17.3 M8.6 26.4 H20.8" stroke="#ffffff" stroke-width="1.4"/></g>
<path d="M42.5 993 L69 1019 M69 993 L42.5 1019" stroke="#ffffff" stroke-width="3"/>
<rect x="1322" y="177" width="48" height="48" fill="#9ee3fa" rx="3"/>
<path d="M1339.7 184.6 H1351.8 V194.7 H1362.5 V206.5 H1351.8 V217.5 H1339.7 V206.5 H1329.3 V194.7 H1339.7 Z" fill="#cfe0a9" stroke="#f4fbff" stroke-width="1"/>
<rect x="1381" y="178" width="2" height="46" fill="url(#navyV)" />
<rect x="1394" y="177" width="48" height="48" fill="#00bef4" rx="3"/>
<circle cx="1406.6" cy="189.3" r="3.1" fill="none" stroke="#fff" stroke-width="1.1"/>
<circle cx="1406.6" cy="197.7" r="3.1" fill="none" stroke="#fff" stroke-width="1.1"/>
<circle cx="1406.6" cy="206.5" r="3.1" fill="none" stroke="#fff" stroke-width="1.1"/>
<line x1="1412" y1="189.3" x2="1432.3" y2="189.3" stroke="#fff" stroke-width="1.2" />
<line x1="1412" y1="197.7" x2="1432.3" y2="197.7" stroke="#fff" stroke-width="1.2" />
<line x1="1412" y1="206.5" x2="1432.3" y2="206.5" stroke="#fff" stroke-width="1.2" />
<line x1="1412" y1="214.9" x2="1432.3" y2="214.9" stroke="#fff" stroke-width="1.2" />
<rect x="1450" y="177" width="48" height="48" fill="#00bef4" rx="3"/>
<g transform="translate(1460,185.6) scale(0.99)"><path d="M6.55 8 V1.5 Q6.55 0.75 7.3 0.75 H22.4 Q23.15 0.75 23.15 1.5 V8" fill="none" stroke="#ffffff" stroke-width="1.5"/><rect x="0" y="8" width="29.4" height="12.5" rx="1.6" fill="#ffffff"/><circle cx="25.6" cy="12.3" r="1.5" fill="#00bef4"/><path d="M6.55 20.5 V28.3 Q6.55 29.05 7.3 29.05 H22.4 Q23.15 29.05 23.15 28.3 V20.5" fill="none" stroke="#ffffff" stroke-width="1.5"/><path d="M8.6 23.2 H17.3 M8.6 26.4 H20.8" stroke="#ffffff" stroke-width="1.4"/></g>
<rect x="1506" y="177" width="48" height="48" fill="#00bef4" rx="3"/>
<path d="M1518 202 V212.8 H1542.2 V202" fill="none" stroke="#fff" stroke-width="1.6"/>
<path d="M1529.8 206 V189.5 M1524.8 194.2 L1529.8 189 L1534.8 194.2" fill="none" stroke="#fff" stroke-width="1.6"/>
<rect x="1565" y="178" width="2" height="46" fill="url(#navyV)" />
<rect x="1578" y="177" width="48" height="48" fill="#00bef4" rx="3"/>
<g fill="none" stroke="#fff" stroke-width="1.1"><path d="M1588.7 200.8 A7.4 7.4 0 0 1 1602.9 194.6"/><path d="M1595.9 185.8 V188.6 M1590.4 187.6 L1591.6 189.9 M1601.4 187.6 L1600.2 189.9 M1585.3 192 L1587.6 193.3 M1606.5 192 L1604.2 193.3 M1583.9 198.2 H1586.8"/></g>
<path d="M1594.6 203 A4.3 4.3 0 0 1 1601.6 197.6 A4.2 4.2 0 0 1 1608.6 201 L1606 207 Z" fill="#00bef4"/>
<path d="M1594.6 201.2 A4.3 4.3 0 0 1 1601.6 197.6 A4.2 4.2 0 0 1 1607.8 199.8" fill="none" stroke="#fff" stroke-width="1.1"/>
<path d="M1601 209.5 H1590.6 A3.3 3.3 0 0 1 1590.2 202.9 A4.6 4.6 0 0 1 1598.6 200.3 A4.1 4.1 0 0 1 1605.2 200.6 L1605 209.5 Z" fill="#00bef4"/>
<path d="M1601 209.5 H1590.6 A3.3 3.3 0 0 1 1590.2 202.9 A4.6 4.6 0 0 1 1598.6 200.3 A4.1 4.1 0 0 1 1605.2 200.6" fill="none" stroke="#fff" stroke-width="1.1"/>
<circle cx="1611.1" cy="206.9" r="8.4" fill="#00bef4" stroke="#fff" stroke-width="1.15"/>
<rect x="1610.1" y="205" width="2" height="6.6" fill="#fff"/><circle cx="1611.1" cy="202.6" r="1.2" fill="#fff"/>
<rect x="1634" y="177" width="48" height="48" fill="#9ee3fa" rx="3"/>
<g fill="#ffffff"><path d="M1657.5 198.8 C1654 195 1652.5 189 1655 187 C1657.5 185 1662 185.5 1663 188 C1664 191 1660.5 195.5 1657.5 198.8 Z"/><path d="M1657.5 198.8 C1653 196 1647.5 193 1645.5 195 C1644 197.5 1645 201.5 1648 202.5 C1651 203 1655 200.5 1657.5 198.8 Z"/><path d="M1657.5 198.8 C1657 203 1656.5 208.5 1654 210.5 C1651.5 211.5 1650 209.5 1651 207 C1652.5 203.5 1655 201 1657.5 198.8 Z"/><path d="M1657.5 198.8 C1661 195.5 1667 194.5 1669.5 196.5 C1671 198 1670 201 1667 202 C1664 202.5 1660 200.5 1657.5 198.8 Z"/></g>
<circle cx="1657.5" cy="198.8" r="2.3" fill="#9ee3fa" stroke="#fff" stroke-width="1.1"/>
<circle cx="1667.3" cy="206.9" r="8.4" fill="#9ee3fa" stroke="#fff" stroke-width="1.15"/>
<rect x="1666.3" y="205" width="2" height="6.6" fill="#fff"/><circle cx="1667.3" cy="202.6" r="1.2" fill="#fff"/>
<rect x="1331" y="239.5" width="531" height="1.6" fill="url(#navyH)" />
<line x1="1318" y1="276.5" x2="1878" y2="276.5" stroke="#111" stroke-width="1" />
<rect x="1318" y="302" width="560" height="24.5" fill="#e1e1e3" />
<rect x="1351" y="302" width="2" height="24.5" fill="#ffffff" />
<rect x="1399" y="302" width="2" height="24.5" fill="#ffffff" />
<rect x="1436.5" y="302" width="2" height="24.5" fill="#ffffff" />
<rect x="1474.6" y="302" width="2" height="24.5" fill="#ffffff" />
<rect x="1516.2" y="302" width="2" height="24.5" fill="#ffffff" />
<rect x="1642" y="302" width="2" height="24.5" fill="#ffffff" />
<rect x="1559.5" y="282.5" width="79" height="14.2" fill="#ffffff" stroke="#000" stroke-width="1.15"/>
<rect x="1560" y="283" width="17.5" height="13.5" fill="#a9a9a9" />
<rect x="1620.3" y="283" width="17.8" height="13.5" fill="#a9a9a9" />
<line x1="1598.5" y1="283" x2="1598.5" y2="296.2" stroke="#138a13" stroke-width="1" />
<circle cx="1594.7" cy="289.6" r="2.3" fill="#000"/>
<rect x="1559.5" y="307.5" width="79" height="14.2" fill="#ffffff" stroke="#000" stroke-width="1.15"/>
<rect x="1560" y="308" width="17.5" height="13.5" fill="#a9a9a9" />
<rect x="1620.3" y="308" width="17.8" height="13.5" fill="#a9a9a9" />
<line x1="1598.5" y1="308" x2="1598.5" y2="321.2" stroke="#138a13" stroke-width="1" />
<circle cx="1572.5" cy="314.6" r="2.3" fill="#000"/>
<rect x="1337" y="678" width="525" height="1.8" fill="url(#navyH)" />
<rect x="1318" y="690.6" width="8" height="42" fill="#f2c81e" />
<circle cx="1488.9" cy="722.9" r="7.6" fill="none" stroke="#2a4a7e" stroke-width="1.2"/>
<rect x="1488" y="721.2" width="1.9" height="6" fill="#2a4a7e"/><circle cx="1488.9" cy="718.6" r="1.1" fill="#2a4a7e"/>
<rect x="1372.8" y="840.2" width="245.2" height="19.5" fill="#f49a9a" />
<rect x="1619.5" y="840.2" width="245.5" height="19.5" fill="url(#hatchG)" />
<rect x="1620" y="840.2" width="15.5" height="19.5" fill="#ffffff" fill-opacity="0.75"/>
<rect x="1372.8" y="947.8" width="245.2" height="20" fill="url(#hatchR)" />
<rect x="1619.7" y="947.8" width="245.3" height="20" fill="#a8d69e" />
<path d="M1601 831 H1618 Q1620 831 1620 833 V839 L1609.5 843 L1599 839 V833 Q1599 831 1601 831 Z" fill="#ffffff" stroke="#6e6e6e" stroke-width="1.7" stroke-linejoin="round"/>
<path d="M1779.8 938.8 H1796.8 Q1798.8 938.8 1798.8 940.8 V947.3 L1788.3 951.2 L1777.8 947.3 V940.8 Q1777.8 938.8 1779.8 938.8 Z" fill="#ffffff" stroke="#6e6e6e" stroke-width="1.7" stroke-linejoin="round"/></svg>
<div class="t" style="left:64.62px;top:26.53px;font-size:20.58px;line-height:20.58px;font-weight:700;color:#ffffff;transform:scaleX(0.8264)">VISIT REVIEW</div><div class="t" style="left:1058.41px;top:11.11px;font-size:19.72px;line-height:19.72px;font-weight:400;color:#4a78b6;transform:scaleX(0.7082);-webkit-text-stroke:0.3px #4a78b6">Subject</div><div class="t" style="left:1059.03px;top:39.26px;font-size:19.13px;line-height:19.13px;font-weight:700;color:#1d3c70;transform:scaleX(0.9147)">SUBJECT DEMO</div><div class="t" style="left:1260.93px;top:11.11px;font-size:19.72px;line-height:19.72px;font-weight:400;color:#4a78b6;transform:scaleX(0.6734);-webkit-text-stroke:0.3px #4a78b6">Gender</div><div class="t" style="left:1353.63px;top:11.11px;font-size:19.72px;line-height:19.72px;font-weight:400;color:#4a78b6;transform:scaleX(0.6743);-webkit-text-stroke:0.3px #4a78b6">Age</div><div class="t" style="left:1418.00px;top:11.11px;font-size:19.72px;line-height:19.72px;font-weight:400;color:#4a78b6;transform:scaleX(0.7235);-webkit-text-stroke:0.3px #4a78b6">Weight</div><div class="t" style="left:1520.87px;top:11.11px;font-size:19.72px;line-height:19.72px;font-weight:400;color:#4a78b6;transform:scaleX(0.7377);-webkit-text-stroke:0.3px #4a78b6">Height</div><div class="t" style="left:1625.12px;top:11.11px;font-size:19.72px;line-height:19.72px;font-weight:400;color:#4a78b6;transform:scaleX(0.6771);-webkit-text-stroke:0.3px #4a78b6">Visit Date</div><div class="t" style="left:1260.44px;top:39.26px;font-size:19.13px;line-height:19.13px;font-weight:700;color:#1d3c70;transform:scaleX(1.0307)">Male</div><div class="t" style="left:1353.47px;top:39.26px;font-size:19.13px;line-height:19.13px;font-weight:700;color:#1d3c70;transform:scaleX(1.0335)">46.0</div><div class="t" style="left:1416.99px;top:39.26px;font-size:19.13px;line-height:19.13px;font-weight:700;color:#1d3c70;transform:scaleX(1.0110)">76.00 kg</div><div class="t" style="left:1520.49px;top:39.26px;font-size:19.13px;line-height:19.13px;font-weight:700;color:#1d3c70;transform:scaleX(1.0028)">178.0 cm</div><div class="t" style="left:1624.97px;top:39.26px;font-size:19.13px;line-height:19.13px;font-weight:700;color:#1d3c70;transform:scaleX(1.0745)">28/03/2013</div><div class="t" style="left:127.57px;top:88.64px;font-size:15.98px;line-height:15.98px;font-weight:700;color:#c9cbce;transform:scaleX(0.9395)">Overview</div><div class="t" style="left:225.61px;top:88.64px;font-size:15.98px;line-height:15.98px;font-weight:700;color:#c9cbce;transform:scaleX(0.8783)">FVC</div><div class="t" style="left:285.02px;top:88.64px;font-size:15.98px;line-height:15.98px;font-weight:700;color:#c9cbce;transform:scaleX(0.9576)">MVV</div><div class="t" style="left:349.12px;top:88.64px;font-size:15.98px;line-height:15.98px;font-weight:700;color:#c9cbce;transform:scaleX(0.8380)">DLCO SB</div><div class="t" style="left:440.60px;top:88.64px;font-size:15.98px;line-height:15.98px;font-weight:700;color:#c9cbce;transform:scaleX(0.8543)">DLCO IB</div><div class="t" style="left:527.65px;top:88.64px;font-size:15.98px;line-height:15.98px;font-weight:700;color:#ffffff;transform:scaleX(0.8452)">ROCC</div><div class="t" style="left:598.07px;top:88.64px;font-size:15.98px;line-height:15.98px;font-weight:700;color:#c9cbce;transform:scaleX(0.9166)">N2 MBW</div><div class="t" style="left:689.12px;top:88.64px;font-size:15.98px;line-height:15.98px;font-weight:700;color:#c9cbce;transform:scaleX(0.8820)">N2 SBW</div><div class="t" style="left:775.61px;top:88.64px;font-size:15.98px;line-height:15.98px;font-weight:700;color:#c9cbce;transform:scaleX(0.8902)">P0.1</div><div class="t" style="left:838.04px;top:88.64px;font-size:15.98px;line-height:15.98px;font-weight:700;color:#27467a;transform:scaleX(0.9289)">MIP/MEP</div><div class="t" style="left:931.10px;top:88.64px;font-size:15.98px;line-height:15.98px;font-weight:700;color:#c9cbce;transform:scaleX(0.8607)">FOT</div><div class="t" style="left:990.03px;top:88.64px;font-size:15.98px;line-height:15.98px;font-weight:700;color:#c9cbce;transform:scaleX(0.9795)">6MWT</div><div class="t" style="left:31.50px;top:148.63px;font-size:17.60px;line-height:17.60px;font-weight:700;color:#4f6a96;transform:scaleX(0.6461)">New Test</div><div class="t" style="left:31.52px;top:246.63px;font-size:17.60px;line-height:17.60px;font-weight:700;color:#ffffff;transform:scaleX(0.6357)">Edit Visit</div><div class="t" style="left:25.88px;top:344.63px;font-size:17.60px;line-height:17.60px;font-weight:700;color:#ffffff;transform:scaleX(0.6492)">Offline Test</div><div class="t" style="left:44.22px;top:779.13px;font-size:17.60px;line-height:17.60px;font-weight:700;color:#ffffff;transform:scaleX(0.6287)">Visit</div><div class="t" style="left:42.16px;top:1043.13px;font-size:17.60px;line-height:17.60px;font-weight:700;color:#ffffff;transform:scaleX(0.5961)">Close</div><div class="t" style="left:144.20px;top:142.25px;font-size:14.49px;line-height:14.49px;font-weight:700;color:#141414;transform:scaleX(0.7952)">Mouth Pressure vs Time</div><div class="t" style="left:1406.35px;top:257.46px;font-size:15.68px;line-height:15.68px;font-weight:400;color:#141414;transform:scaleX(0.6464);-webkit-text-stroke:0.3px #141414">Meas.</div><div class="t" style="left:1445.92px;top:257.46px;font-size:15.68px;line-height:15.68px;font-weight:400;color:#141414;transform:scaleX(0.6276);-webkit-text-stroke:0.3px #141414">Pred</div><div class="t" style="left:1481.53px;top:257.46px;font-size:15.68px;line-height:15.68px;font-weight:400;color:#141414;transform:scaleX(0.6265);-webkit-text-stroke:0.3px #141414">% Pred</div><div class="t" style="left:1567.37px;top:256.26px;font-size:15.07px;line-height:15.07px;font-weight:400;color:#141414;transform:scaleX(0.5965);-webkit-text-stroke:0.3px #141414">z score</div><div class="t" style="left:1323.47px;top:281.59px;font-size:16.25px;line-height:16.25px;font-weight:400;color:#141414;transform:scaleX(0.7192);-webkit-text-stroke:0.3px #141414">MIP</div><div class="t" style="left:1358.82px;top:281.59px;font-size:16.25px;line-height:16.25px;font-weight:400;color:#141414;transform:scaleX(0.7044);-webkit-text-stroke:0.3px #141414">cmH20</div><div class="t" style="left:1409.40px;top:281.59px;font-size:16.25px;line-height:16.25px;font-weight:700;color:#141414;transform:scaleX(1.0515)">93</div><div class="t" style="left:1444.73px;top:281.59px;font-size:16.25px;line-height:16.25px;font-weight:400;color:#141414;transform:scaleX(0.8704)">101</div><div class="t" style="left:1486.96px;top:281.59px;font-size:16.25px;line-height:16.25px;font-weight:400;color:#141414;transform:scaleX(1.0138)">92</div><div class="t" style="left:1521.51px;top:281.59px;font-size:16.25px;line-height:16.25px;font-weight:400;color:#141414;transform:scaleX(0.9153)">-0.35</div><div class="t" style="left:1323.49px;top:306.88px;font-size:15.15px;line-height:15.15px;font-weight:400;color:#141414;transform:scaleX(0.7135);-webkit-text-stroke:0.3px #141414">MEP</div><div class="t" style="left:1357.79px;top:306.88px;font-size:15.15px;line-height:15.15px;font-weight:400;color:#141414;transform:scaleX(0.7617);-webkit-text-stroke:0.3px #141414">cmH20</div><div class="t" style="left:1409.93px;top:306.88px;font-size:15.15px;line-height:15.15px;font-weight:700;color:#141414;transform:scaleX(1.0686)">76</div><div class="t" style="left:1443.52px;top:306.88px;font-size:15.15px;line-height:15.15px;font-weight:400;color:#141414;transform:scaleX(1.0101)">136</div><div class="t" style="left:1486.88px;top:306.88px;font-size:15.15px;line-height:15.15px;font-weight:400;color:#141414;transform:scaleX(1.0814)">56</div><div class="t" style="left:1521.46px;top:306.88px;font-size:15.15px;line-height:15.15px;font-weight:400;color:#141414;transform:scaleX(0.9751)">-2.07</div><div class="t" style="left:1333.16px;top:693.61px;font-size:15.08px;line-height:15.08px;font-weight:400;color:#141414;transform:scaleX(0.5577);-webkit-text-stroke:0.3px #141414">SYSTEM QC</div><div class="t" style="left:1521.44px;top:693.61px;font-size:15.08px;line-height:15.08px;font-weight:400;color:#141414;transform:scaleX(0.5289);-webkit-text-stroke:0.3px #141414">OPERATOR QC</div><div class="t" style="left:1707.06px;top:693.61px;font-size:15.08px;line-height:15.08px;font-weight:400;color:#141414;transform:scaleX(0.5711);-webkit-text-stroke:0.3px #141414">POSITION</div><div class="t" style="left:1339.99px;top:712.95px;font-size:16.82px;line-height:16.82px;font-weight:700;color:#1d3c70;transform:scaleX(0.8539)">C - SATISFAC...</div><div class="t" style="left:1525.33px;top:712.55px;font-size:17.10px;line-height:17.10px;font-weight:700;color:#1d3c70;transform:scaleX(1.3151)">-</div><div class="t" style="left:1713.12px;top:712.95px;font-size:16.82px;line-height:16.82px;font-weight:700;color:#1d3c70;transform:scaleX(0.8799)">UNDEFINED</div><div class="t" style="left:1602.09px;top:815.35px;font-size:14.35px;line-height:14.35px;font-weight:700;color:#141414;transform:scaleX(0.9499)">76</div><div class="t" style="left:1325.26px;top:833.20px;font-size:15.23px;line-height:15.23px;font-weight:400;color:#141414;transform:scaleX(0.8013);-webkit-text-stroke:0.3px #141414">MEP</div><div class="t" style="left:1326.11px;top:852.38px;font-size:13.50px;line-height:13.50px;font-weight:400;color:#141414;transform:scaleX(0.7308);-webkit-text-stroke:0.3px #141414">cmH20</div><div class="t" style="left:1622.16px;top:841.50px;font-size:14.49px;line-height:14.49px;font-weight:400;color:#141414;transform:scaleX(0.7333);-webkit-text-stroke:0.3px #141414">79</div><div class="t" style="left:1610.45px;top:861.19px;font-size:14.23px;line-height:14.23px;font-weight:400;color:#8c8c8c;transform:scaleX(0.6784);-webkit-text-stroke:0.3px #8c8c8c">LLN</div><div class="t" style="left:1781.73px;top:923.35px;font-size:14.35px;line-height:14.35px;font-weight:700;color:#141414;transform:scaleX(0.8273)">93</div><div class="t" style="left:1325.19px;top:940.95px;font-size:15.23px;line-height:15.23px;font-weight:400;color:#141414;transform:scaleX(0.8454);-webkit-text-stroke:0.3px #141414">MIP</div><div class="t" style="left:1326.11px;top:959.63px;font-size:13.50px;line-height:13.50px;font-weight:400;color:#141414;transform:scaleX(0.7308);-webkit-text-stroke:0.3px #141414">cmH20</div><div class="t" style="left:1622.06px;top:950.72px;font-size:13.64px;line-height:13.64px;font-weight:400;color:#141414;transform:scaleX(0.8067);-webkit-text-stroke:0.3px #141414">55</div><div class="t" style="left:1610.45px;top:969.35px;font-size:14.08px;line-height:14.08px;font-weight:400;color:#8c8c8c;transform:scaleX(0.6784);-webkit-text-stroke:0.3px #8c8c8c">LLN</div><div class="t" style="left:127.71px;top:1048.62px;font-size:14.75px;line-height:14.75px;font-weight:700;color:#141414;transform:scaleX(1.0124)">Interpretation / Notes</div>
</body></html>
